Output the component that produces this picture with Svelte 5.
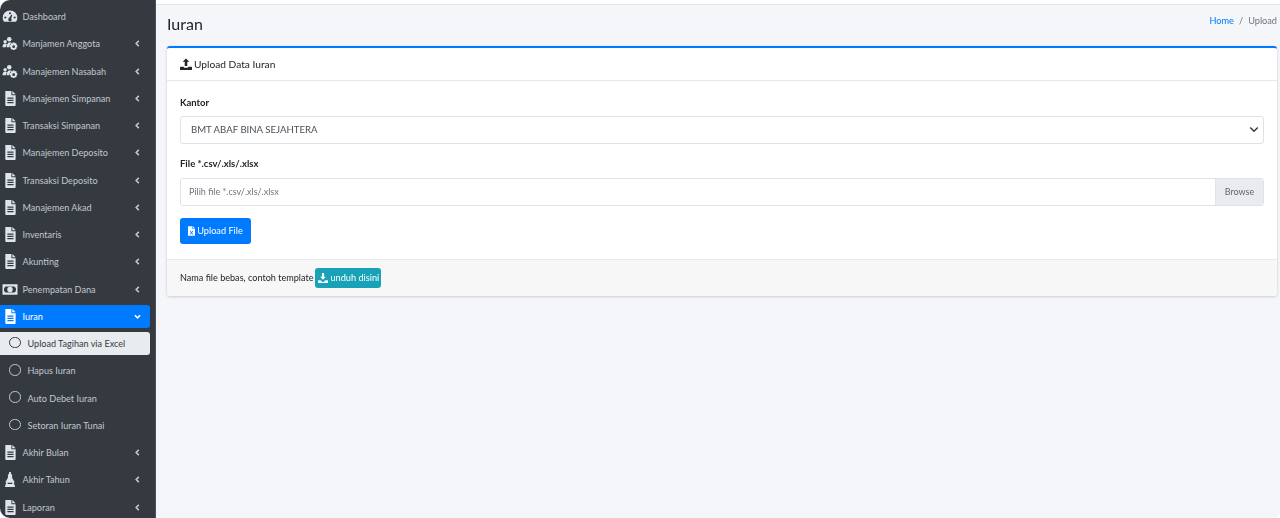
<script>
  const before = [
    { label: 'Dashboard', icon: 'gauge', arrow: false },
    { label: 'Manjamen Anggota', icon: 'users' },
    { label: 'Manajemen Nasabah', icon: 'users' },
    { label: 'Manajemen Simpanan', icon: 'file' },
    { label: 'Transaksi Simpanan', icon: 'file' },
    { label: 'Manajemen Deposito', icon: 'file' },
    { label: 'Transaksi Deposito', icon: 'file' },
    { label: 'Manajemen Akad', icon: 'file' },
    { label: 'Inventaris', icon: 'file' },
    { label: 'Akunting', icon: 'file' },
    { label: 'Penempatan Dana', icon: 'money' }
  ];
  const subs = ['Upload Tagihan via Excel', 'Hapus Iuran', 'Auto Debet Iuran', 'Setoran Iuran Tunai'];
  const after = [
    { label: 'Akhir Bulan', icon: 'file' },
    { label: 'Akhir Tahun', icon: 'flask' },
    { label: 'Laporan', icon: 'file' }
  ];
</script>

{#snippet icon(name)}
  <svg class="ico" viewBox="0 0 16 16" aria-hidden="true">
    {#if name === 'gauge'}
      <path fill="currentColor" fill-rule="evenodd" d="M8 1.500A7.800 7.800 0 0 0 .2 9.300c0 1.500.4 2.900 1.200 4 .2.300.5.400.8.400h11.600c.3 0 .6-.1.800-.4.800-1.100 1.200-2.500 1.200-4A7.800 7.800 0 0 0 8 1.500ZM8 3.500a1.100 1.100 0 1 1 0 2.200 1.100 1.100 0 0 1 0-2.200ZM3 10.200A1.100 1.100 0 1 1 3 8a1.100 1.100 0 0 1 0 2.200Zm10 0A1.100 1.100 0 1 1 13 8a1.100 1.100 0 0 1 0 2.200ZM9.800 12a1.900 1.900 0 1 1-2.800-2.300l2.500-3.900.9.400-1.100 4.300c.3.400.5 1 .5 1.500Z"/>
    {:else if name === 'users'}
      <g fill="currentColor">
        <circle cx="2.800" cy="6" r="1.800"/>
        <circle cx="7.200" cy="3.400" r="2.400"/>
        <path d="M0 12c0-2.400 1-4 2.800-4 .9 0 1.500.3 2 .8-.7.800-1.100 2-1.200 3.200H0Z"/>
        <path d="M4.400 12c0-2.700 1.100-5 3.200-5.300.9 0 1.600.2 2.100.6-1.300.7-2.200 2.200-2.200 4.700H4.400Z"/>
        <path fill-rule="evenodd" d="M11.900 6.800l1 .2.300 1 1-.5.900.9-.5 1 1 .3.200 1.200-.2 1.200-1 .3.500 1-.9.900-1-.5-.3 1-1 .2-1.100-.2-.3-1-1 .5-.9-.9.500-1-1-.3-.2-1.200.2-1.200 1-.3-.5-1 .9-.9 1 .5.300-1 1.100-.2Zm0 3.100a1.500 1.500 0 1 0 0 3 1.500 1.500 0 0 0 0-3Z"/>
      </g>
    {:else if name === 'file'}
      <path fill="currentColor" fill-rule="evenodd" d="M3 0h6.500v4.500H14V15a1 1 0 0 1-1 1H4a1 1 0 0 1-1-1V0Zm7.500 0L14 3.500h-3.500V0ZM5.200 7v1.200h6.600V7H5.200Zm0 2.400v1.200h6.600V9.400H5.200Zm0 2.400V13h6.600v-1.200H5.200Z"/>
    {:else if name === 'money'}
      <path fill="currentColor" fill-rule="evenodd" d="M0 2.500h16v11H0v-11Zm3 2.200a1.500 1.500 0 0 1-1.300 1.500v3.600A1.500 1.500 0 0 1 3 11.300h10a1.500 1.500 0 0 1 1.300-1.500V6.200A1.500 1.500 0 0 1 13 4.700H3Zm5 .4a2.900 2.900 0 1 1 0 5.800 2.900 2.900 0 0 1 0-5.800Z"/>
    {:else if name === 'flask'}
      <path fill="currentColor" fill-rule="evenodd" d="M7 0h2v1.800l1.200 1.200v3l2.800 4.800-1 .4L13.500 16h-11l1.500-4.800-1-.4L5.800 6V3L7 1.800V0ZM5.500 11.500v1.200h5v-1.200h-5Z"/>
    {/if}
  </svg>
{/snippet}

{#snippet chevron(down)}
  <svg class="chev" class:down viewBox="0 0 8 8" aria-hidden="true">
    <path d="M5.500 1 2.500 4l3 3" fill="none" stroke="currentColor" stroke-width="1.800"/>
  </svg>
{/snippet}

{#snippet item(it)}
  <a class="nav" href="#top">
    {@render icon(it.icon)}
    <span class="lbl">{it.label}</span>
    {#if it.arrow !== false}{@render chevron(false)}{/if}
  </a>
{/snippet}

<div class="page">
  <aside class="side">
    {#each before as it}{@render item(it)}{/each}
    <a class="nav active" href="#top">
      {@render icon('file')}
      <span class="lbl">Iuran</span>
      {@render chevron(true)}
    </a>
    {#each subs as s, i}
      <a class="sub" class:cur={i === 0} href="#top">
        <span class="ring"></span>
        <span>{s}</span>
      </a>
    {/each}
    {#each after as it}{@render item(it)}{/each}
  </aside>

  <main class="main">
    <div class="strip"></div>
    <header class="head">
      <h1>Iuran</h1>
      <nav class="crumb"><a href="#top">Home</a><span class="sep">/</span><span>Upload</span></nav>
    </header>

    <section class="card">
      <div class="card-h">
        <svg class="up" viewBox="0 0 16 16" aria-hidden="true">
          <path fill="currentColor" d="M8 .5 12.500 5H9.700v5.500H6.300V5H3.500L8 .5ZM.8 11.500h4.200v.6c0 .6.400 1 1 1h4c.6 0 1-.4 1-1v-.6h4.200c.4 0 .8.400.8.800v2.900c0 .4-.4.800-.8.800H.8c-.4 0-.8-.4-.8-.8v-2.900c0-.4.400-.8.800-.8Z"/>
        </svg>
        <span>Upload Data Iuran</span>
      </div>
      <div class="card-b">
        <label class="f-label" for="kantor">Kantor</label>
        <div class="select" id="kantor">
          <span>BMT ABAF BINA SEJAHTERA</span>
          <svg viewBox="0 0 12 8" aria-hidden="true"><path d="M1.500 1.500 6 6l4.500-4.500" fill="none" stroke="currentColor" stroke-width="1.800"/></svg>
        </div>
        <label class="f-label second" for="file">File *.csv/.xls/.xlsx</label>
        <div class="file" id="file">
          <span class="ph">Pilih file *.csv/.xls/.xlsx</span>
          <span class="browse">Browse</span>
        </div>
        <button class="btn primary" type="button">
          <svg viewBox="0 0 12 16" aria-hidden="true"><path fill="currentColor" fill-rule="evenodd" d="M0 0h7.500v4.500H12V16H0V0Zm8.500 0L12 3.500H8.500V0ZM3 7.500 5 11l-2 3h1.500L6 11.800 7.500 14H9l-2-3 2-3.500H7.500L6 10 4.500 7.500H3Z"/></svg>
          Upload File
        </button>
      </div>
      <div class="card-f">
        <span>Nama file bebas, contoh template</span>
        <button class="btn info" type="button">
          <svg viewBox="0 0 16 16" aria-hidden="true"><path fill="currentColor" d="M6.300 0h3.400v6h2.800L8 10.700 3.500 6h2.800V0ZM.8 11.500h3.400l2.500 2.500c.7.700 1.900.7 2.600 0l2.500-2.500h3.400c.4 0 .8.400.8.800v2.900c0 .4-.4.800-.8.800H.8c-.4 0-.8-.4-.8-.8v-2.900c0-.4.400-.8.800-.8Z"/></svg>
          unduh disini
        </button>
      </div>
    </section>
  </main>
</div>

<style>
  :global(body) {
    margin: 0;
    background: #fff;
  }
  .page {
    display: flex;
    width: 1280px;
    height: 518px;
    overflow: hidden;
    font-family: "Lato", "Open Sans", sans-serif;
    color: #212529;
    background: #f4f6f9;
    border-radius: 10px 0 6px 10px;
    filter: blur(0.6px);
  }
  .side {
    flex: 0 0 156px;
    height: 518px;
    overflow: hidden;
    background: #343a40;
    border-right: 1px solid #4b545c;
    box-sizing: border-box;
    padding-top: 5px;
    color: #c2c7d0;
    font-size: 9.1px;
  }
  a {
    text-decoration: none;
    color: inherit;
  }
  .nav {
    display: flex;
    align-items: center;
    height: 23.25px;
    margin: 0 5px 4px 0;
    padding: 0 9px 0 2px;
    border-radius: 0 3px 3px 0;
  }
  .nav.active {
    background: #007bff;
    color: #fff;
  }
  .ico {
    width: 16px;
    height: 15px;
    margin-right: 4.5px;
    flex: none;
    color: #dfe5ec;
  }
  .active .ico {
    color: #fff;
  }
  .lbl {
    flex: 1;
    white-space: nowrap;
  }
  .chev {
    width: 7px;
    height: 7px;
    flex: none;
  }
  .chev.down {
    transform: rotate(-90deg);
  }
  .sub {
    display: flex;
    align-items: center;
    height: 23.25px;
    margin: 0 5px 4px 0;
    padding-left: 9px;
    gap: 7px;
    border-radius: 0 3px 3px 0;
    white-space: nowrap;
  }
  .sub.cur {
    background: #e9ecef;
    color: #343a40;
  }
  .ring {
    width: 9.5px;
    height: 9.5px;
    border: 1.5px solid currentColor;
    border-radius: 50%;
    flex: none;
    margin-top: -2px;
  }
  .main {
    flex: 1;
    min-width: 0;
    padding: 0 3px 0 11px;
  }
  .strip {
    height: 4px;
    margin: 0 -3px 0 -11px;
    background: #fff;
    border-bottom: 1px solid #e3e6ea;
  }
  .head {
    display: flex;
    align-items: center;
    justify-content: space-between;
    height: 41px;
  }
  h1 {
    margin: 0 0 5px;
    font-size: 16px;
    font-weight: 400;
  }
  .crumb {
    display: flex;
    gap: 5px;
    font-size: 9.2px;
    color: #6c757d;
    margin-bottom: 11px;
  }
  .crumb a {
    color: #007bff;
  }
  .card {
    background: #fff;
    border-top: 2.5px solid #007bff;
    border-radius: 3px;
    box-shadow: 0 0 1px rgba(0, 0, 0, 0.2), 0 1px 3px rgba(0, 0, 0, 0.15);
  }
  .card-h {
    display: flex;
    align-items: center;
    gap: 2px;
    height: 31.5px;
    padding: 0 13px;
    font-size: 10.2px;
    border-bottom: 1px solid #e6e8ea;
  }
  .up {
    width: 12px;
    height: 12px;
  }
  .card-b {
    padding: 15px 13px 15px;
  }
  .f-label {
    display: block;
    font-size: 9.5px;
    font-weight: 700;
    line-height: 13px;
    margin-bottom: 7px;
  }
  .second {
    margin-top: 13px;
    margin-bottom: 8px;
  }
  .select,
  .file {
    display: flex;
    align-items: center;
    box-sizing: border-box;
    border: 1px solid #dfe3e7;
    border-radius: 3px;
    background: #fff;
    color: #495057;
    font-size: 9px;
  }
  .select {
    height: 28px;
    padding: 0 4px 0 10px;
    justify-content: space-between;
    font-size: 9.6px;
  }
  .select svg {
    width: 10px;
    height: 7px;
    color: #343a40;
  }
  .file {
    height: 28px;
    padding-left: 8px;
    justify-content: space-between;
    overflow: hidden;
  }
  .ph {
    color: #6c757d;
  }
  .browse {
    display: flex;
    align-items: center;
    justify-content: center;
    height: 100%;
    width: 47px;
    background: #e9ecef;
    border-left: 1px solid #dfe3e7;
    color: #5f666d;
  }
  .btn {
    display: inline-flex;
    align-items: center;
    gap: 2px;
    border: 0;
    color: #fff;
    font: inherit;
    font-size: 9.2px;
    border-radius: 3px;
  }
  .primary {
    margin-top: 12px;
    height: 26px;
    width: 71px;
    justify-content: center;
    background: #007bff;
  }
  .primary svg {
    width: 7px;
    height: 10px;
  }
  .card-f {
    display: flex;
    align-items: center;
    gap: 2px;
    height: 36px;
    padding: 0 13px;
    background: #f7f7f7;
    border-top: 1px solid #e6e8ea;
    border-radius: 0 0 3px 3px;
    font-size: 9.1px;
  }
  .info {
    height: 20px;
    padding: 0 2px 0 3px;
    background: #17a2b8;
  }
  .info svg {
    width: 10px;
    height: 10px;
  }
</style>
